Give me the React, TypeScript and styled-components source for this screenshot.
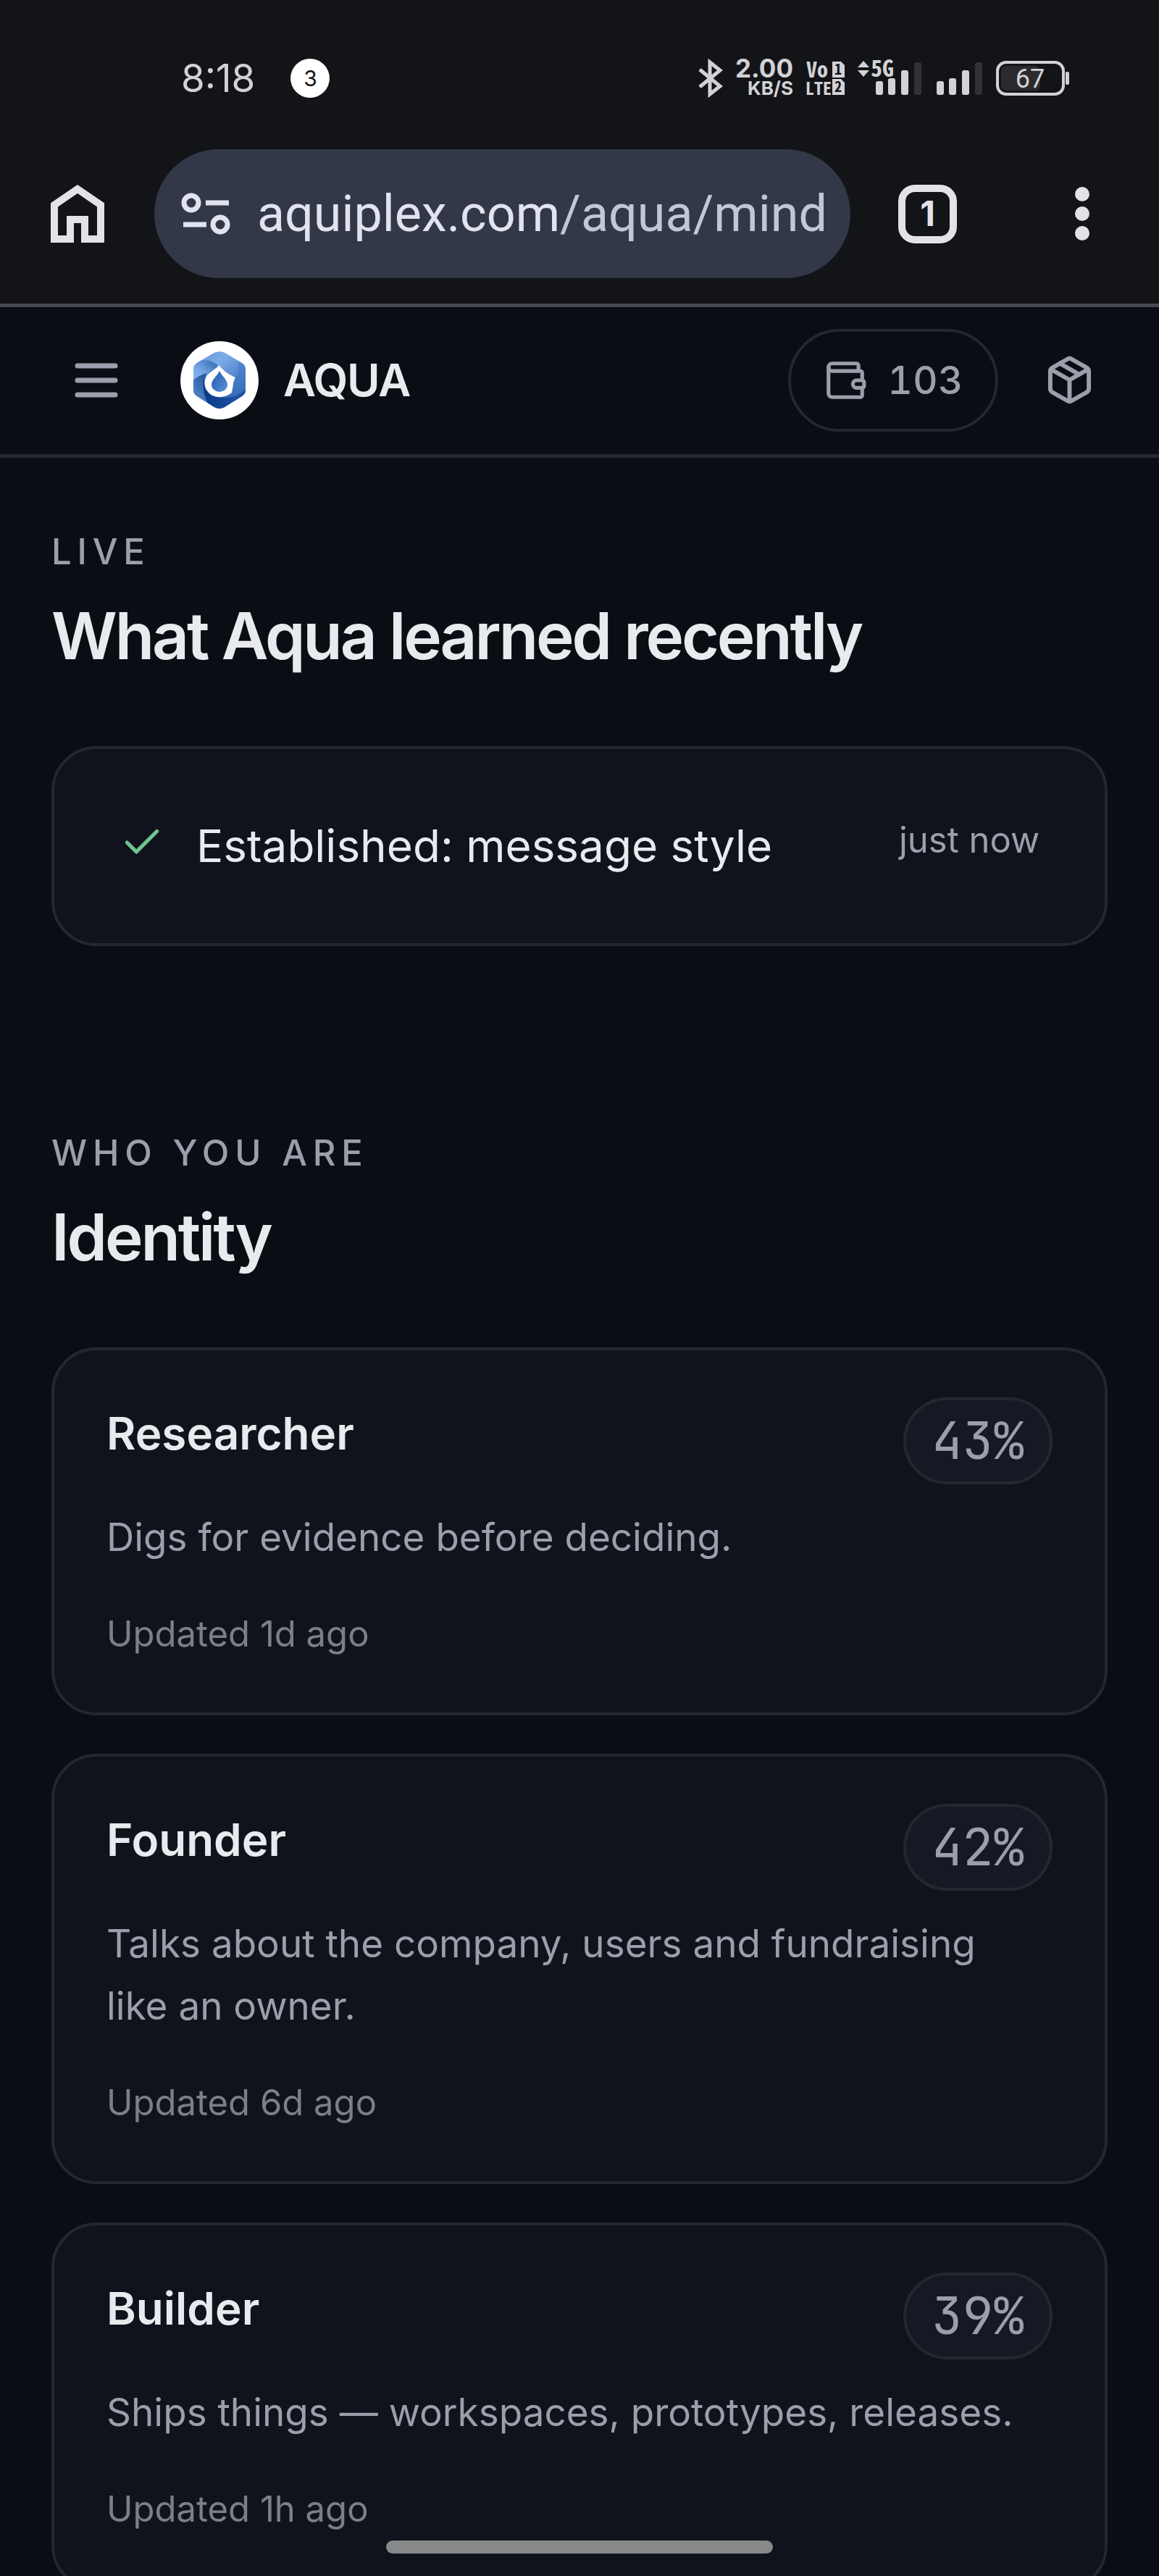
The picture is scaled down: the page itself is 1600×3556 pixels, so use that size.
import React from "react";
import styled, { createGlobalStyle } from "styled-components";
import { Check, Package, Wallet } from "lucide-react";

const color = {
  chrome: "#121418",
  page: "#0a0d14",
  card: "#10131b",
  chip: "#161924",
  line: "#23272e",
  text: "#e8eaee",
  muted: "#9a9fab",
  dim: "#7b7f89",
  status: "#d2d2d4",
  control: "#e2e2e8",
};

const condensed = '"Noto Sans Mono CJK SC", "Noto Sans CJK SC", monospace';

const GlobalStyle = createGlobalStyle`
  *, *::before, *::after { box-sizing: border-box; }
  body {
    margin: 0;
    background: ${color.page};
    color: ${color.text};
    font-family: Inter, "Noto Sans", sans-serif;
  }
  h1, h2, h3, p { margin: 0; }
  button { margin: 0; padding: 0; border: 0; background: none; color: inherit; font: inherit; cursor: pointer; }
  svg { display: block; flex: none; overflow: visible; }
`;

const Screen = styled.div`
  position: relative;
  display: flex;
  flex-direction: column;
  height: 100vh;
  overflow: hidden;
`;

const Chrome = styled.div`
  flex: none;
  background: ${color.chrome};
  border-bottom: 5px solid #48494e;
`;

const StatusBar = styled.div`
  display: flex;
  align-items: center;
  justify-content: space-between;
  height: 206px;
  padding: 10px 124px 0 250px;
  color: ${color.status};
`;

const StatusGroup = styled.div<{ $gap: number }>`
  display: flex;
  align-items: center;
  gap: ${(p) => p.$gap}px;
`;

const Clock = styled.time`
  font-size: 53px;
  line-height: 60px;
`;

const Notifications = styled.span`
  display: grid;
  place-items: center;
  width: 54px;
  height: 54px;
  border-radius: 50%;
  background: #fff;
  color: #121418;
  font-size: 30px;
  line-height: 30px;
`;

const Speed = styled.div`
  display: flex;
  flex-direction: column;
  align-items: flex-end;
  font-size: 35px;
  font-weight: 700;
  line-height: 28px;

  small {
    font-size: 26px;
    line-height: 28px;
  }
`;

const Toolbar = styled.div`
  display: flex;
  align-items: center;
  padding: 0 53px 35px 53px;
  color: ${color.control};
`;

const ToolButton = styled.button`
  display: grid;
  place-items: center;
  width: 107px;
  height: 107px;

  & + & {
    margin-left: 106px;
  }
`;

const AddressBar = styled.button`
  display: flex;
  align-items: center;
  flex: 1;
  min-width: 0;
  height: 178px;
  margin: 0 53px;
  padding: 0 36px;
  gap: 36px;
  border-radius: 89px;
  background: #323848;
  color: #e1e3ef;
  font-family: Roboto, sans-serif;
  font-size: 70px;
  line-height: 84px;
  white-space: nowrap;
`;

const UrlPath = styled.span`
  color: #c3c6d6;
`;

const TabCount = styled.span`
  display: grid;
  place-items: center;
  width: 81px;
  height: 81px;
  border: 10px solid currentColor;
  border-radius: 23px;
  font-size: 48px;
  font-weight: 700;
  line-height: 48px;
`;

const AppHeader = styled.header`
  display: flex;
  align-items: center;
  justify-content: space-between;
  flex: none;
  height: 208px;
  padding: 0 53px 2px;
  border-bottom: 5px solid ${color.line};
  color: ${color.muted};
`;

const HeaderGroup = styled.div<{ $gap: number }>`
  display: flex;
  align-items: center;
  gap: ${(p) => p.$gap}px;
`;

const IconButton = styled.button<{ $size: number }>`
  display: grid;
  place-items: center;
  width: ${(p) => p.$size}px;
  height: ${(p) => p.$size}px;
`;

const Brand = styled.a`
  display: flex;
  align-items: center;
  gap: 34px;
  color: ${color.text};
  font-size: 62px;
  font-weight: 600;
  letter-spacing: -0.02em;
  line-height: 72px;
  text-decoration: none;
`;

const Credits = styled.button`
  display: flex;
  align-items: center;
  height: 142px;
  padding: 0 44px;
  gap: 27px;
  border: 4px solid ${color.line};
  border-radius: 71px;
  font-size: 53px;
  font-weight: 500;
  font-variant-numeric: tabular-nums;
  letter-spacing: 0.01em;
  line-height: 72px;
`;

const Main = styled.main`
  display: flex;
  flex-direction: column;
  gap: 250px;
  padding: 94px 71px;
`;

const Eyebrow = styled.p`
  margin-bottom: 20px;
  color: ${color.muted};
  font-size: 49px;
  font-weight: 500;
  letter-spacing: 0.16em;
  line-height: 72px;
  text-transform: uppercase;
`;

const Heading = styled.h2`
  margin-bottom: 92px;
  font-size: 89px;
  font-weight: 600;
  letter-spacing: -0.035em;
  line-height: 120px;
`;

const Stack = styled.div`
  display: flex;
  flex-direction: column;
  gap: 53px;
`;

const Surface = styled.article`
  border: 4px solid ${color.line};
  border-radius: 62px;
  background: ${color.card};
`;

const EventCard = styled(Surface)`
  display: flex;
  align-items: flex-start;
  gap: 44px;
  padding: 84px 90px;

  svg {
    margin-top: 14px;
    color: #6fc48f;
  }
`;

const EventText = styled.p`
  flex: 1;
  font-size: 62px;
  line-height: 100px;
`;

const EventTime = styled.time`
  color: ${color.muted};
  font-size: 49px;
  line-height: 84px;
`;

const TraitCard = styled(Surface)`
  padding: 65px 72px 70px;
`;

const TraitTop = styled.div`
  display: flex;
  align-items: flex-start;
  justify-content: space-between;
  margin-bottom: 30px;
`;

const TraitName = styled.h3`
  font-size: 62px;
  font-weight: 600;
  line-height: 100px;
`;

const Score = styled.span`
  display: flex;
  align-items: center;
  height: 120px;
  padding: 0 35px;
  border: 4px solid ${color.line};
  border-radius: 60px;
  background: ${color.chip};
  color: ${color.muted};
  font-family: "JetBrains Mono", "DejaVu Sans Mono", monospace;
  font-size: 71px;
  line-height: 80px;
`;

const TraitText = styled.p`
  margin-bottom: 52px;
  padding-right: 18px;
  color: ${color.muted};
  font-size: 53px;
  line-height: 86px;
`;

const Updated = styled.p`
  color: ${color.dim};
  font-size: 49px;
  line-height: 77px;
`;

/* Gesture bar floating over the page content. */
const HomeIndicator = styled.div`
  position: absolute;
  bottom: 31px;
  left: 50%;
  width: 534px;
  height: 18px;
  margin-left: -267px;
  border-radius: 9px;
  background: #87888a;
`;

const BluetoothIcon = () => (
  <svg width="34" height="52" viewBox="0 0 34 52" fill="none" stroke="currentColor" strokeWidth="5">
    <path d="M2 14 30 37 16 48V4l14 11L2 38" />
  </svg>
);

const VolteIcon = () => (
  <svg width="55" height="48" viewBox="0 0 55 48" fill="currentColor" fontFamily={condensed} fontWeight="700">
    <text x="1" y="23" fontSize="30">Vo</text>
    <text x="0" y="47" fontSize="24">LTE</text>
    <path d="M37 1h12l5 5v17H37zM37 25h12l5 5v17H37z" />
    <g fill={color.chrome} fontSize="20" textAnchor="middle">
      <text x="45" y="19">1</text>
      <text x="45" y="43">2</text>
    </g>
  </svg>
);

const Bars = ({ x }: { x: number }) => (
  <g>
    <rect x={x} y="29" width="10" height="19" rx="3" />
    <rect x={x + 17} y="25" width="10" height="23" rx="3" />
    <rect x={x + 35} y="14" width="10" height="34" rx="3" />
    <rect x={x + 53} y="3" width="10" height="45" rx="3" fill="#323236" />
  </g>
);

const SignalIcon = () => (
  <svg width="174" height="50" viewBox="0 0 174 50" fill="currentColor">
    <path d="M0 10 8 1l8 9zM0 14h16l-8 9z" />
    <Bars x={25} />
    <Bars x={109} />
    <text x="18" y="23" fontFamily={condensed} fontWeight="700" fontSize="32" stroke={color.chrome} strokeWidth="2" paintOrder="stroke">5G</text>
  </svg>
);

const BatteryIcon = () => (
  <svg width="101" height="48" viewBox="0 0 101 48">
    <rect x="2" y="2" width="91" height="44" rx="12" fill="none" stroke="currentColor" strokeWidth="4" />
    <rect x="7" y="7" width="54" height="34" rx="7" fill="#2b2b2e" />
    <rect x="96" y="15" width="5" height="18" rx="2" fill="currentColor" />
    <text x="47" y="37" textAnchor="middle" fontFamily="Roboto, sans-serif" fontSize="36" fill="currentColor">67</text>
  </svg>
);

const HomeIcon = () => (
  <svg width="74" height="82" viewBox="0 0 74 82" fill="none" stroke="currentColor" strokeWidth="10">
    <path d="M5 76V29L37 7l32 22v47H47V49H27v27z" />
  </svg>
);

const SiteInfoIcon = () => (
  <svg width="70" height="58" viewBox="0 0 70 58" fill="none" stroke="currentColor" strokeWidth="7">
    <circle cx="15" cy="14" r="10" />
    <path d="M35 14h32M4 44h32" />
    <circle cx="55" cy="44" r="10" />
  </svg>
);

const MoreIcon = () => (
  <svg width="20" height="74" viewBox="0 0 20 74" fill="currentColor">
    <circle cx="10" cy="10" r="10" />
    <circle cx="10" cy="37" r="10" />
    <circle cx="10" cy="64" r="10" />
  </svg>
);

const MenuIcon = () => (
  <svg width="60" height="48" viewBox="0 0 60 48" stroke="currentColor" strokeWidth="7" strokeLinecap="round">
    <path d="M4 4h52M4 24h52M4 44h52" />
  </svg>
);

const Logo = () => (
  <svg width="108" height="108" viewBox="0 0 108 108" aria-hidden="true">
    <defs>
      <linearGradient id="top" x1="0" y1="0" x2="1" y2="1">
        <stop offset="0" stopColor="#5a92dc" />
        <stop offset=".5" stopColor="#7eabe8" />
        <stop offset="1" stopColor="#4d80c8" />
      </linearGradient>
      <linearGradient id="left" x1="0" y1="1" x2="1" y2="0">
        <stop offset="0" stopColor="#8dbbf2" />
        <stop offset=".5" stopColor="#7aabe8" />
        <stop offset="1" stopColor="#2c62ae" />
      </linearGradient>
      <linearGradient id="low" x1="0" y1="1" x2="1" y2="0">
        <stop offset="0" stopColor="#6fa3e4" />
        <stop offset="1" stopColor="#0f408c" />
      </linearGradient>
      <linearGradient id="base" x1="0" y1="0" x2="1" y2="0">
        <stop offset="0" stopColor="#0c3a86" />
        <stop offset="1" stopColor="#2558a6" />
      </linearGradient>
      <linearGradient id="right" x1="0" y1="0" x2="0" y2="1">
        <stop offset="0" stopColor="#5c8fd4" />
        <stop offset="1" stopColor="#2b62b2" />
      </linearGradient>
      <linearGradient id="drop" x1="0" y1="0" x2="1" y2="1">
        <stop offset="0" stopColor="#1f59a8" />
        <stop offset="1" stopColor="#5b93dc" />
      </linearGradient>
      <clipPath id="hex">
        <path d="M47 16q7-3 14 0l24 14q5 3 5 9v28q0 6-5 9L61 91q-7 4-14 0L23 76q-5-3-5-9V39q0-6 5-9z" />
      </clipPath>
    </defs>
    <circle cx="54" cy="54" r="54" fill="#fff" />
    <g clipPath="url(#hex)">
      <path d="M10 10h88v88H10z" fill="url(#right)" />
      <path d="M22 30 54 8l26 20c2 10 0 18-5 22L54 36C46 26 34 24 22 30z" fill="url(#top)" />
      <path d="M10 70V34c10-10 32-12 44 2-16 6-22 12-21 22z" fill="url(#left)" />
      <path d="M10 80V68c4-14 12-19 26-24-6 14 0 30 14 36l-4 16z" fill="url(#low)" />
      <path d="M33 50c-1 16 8 28 27 28 14 0 24-4 32-14v38H50C34 86 29 66 33 50z" fill="url(#base)" />
    </g>
    <path d="M53 33c7 8 12 12 23 17-4 7-3 13-5 21-8 7-24 9-32 0-7-7-7-17-2-24 4-5 12-8 16-14z" fill="#fff" />
    <path d="M54 41c3 7 11 12 11 19a11 10 0 0 1-22 0c0-7 8-12 11-19z" fill="url(#drop)" />
  </svg>
);

const traits = [
  { name: "Researcher", score: 43, text: "Digs for evidence before deciding.", updated: "1d" },
  { name: "Founder", score: 42, text: "Talks about the company, users and fundraising like an owner.", updated: "6d" },
  { name: "Builder", score: 39, text: "Ships things — workspaces, prototypes, releases.", updated: "1h" },
];

export default function App() {
  return (
    <Screen>
      <GlobalStyle />
      <Chrome>
        <StatusBar>
          <StatusGroup $gap={49}>
            <Clock>8:18</Clock>
            <Notifications>3</Notifications>
          </StatusGroup>
          <StatusGroup $gap={17}>
            <BluetoothIcon />
            <Speed>
              2.00
              <small>KB/S</small>
            </Speed>
            <VolteIcon />
            <SignalIcon />
            <BatteryIcon />
          </StatusGroup>
        </StatusBar>
        <Toolbar>
          <ToolButton aria-label="Home">
            <HomeIcon />
          </ToolButton>
          <AddressBar aria-label="Address">
            <SiteInfoIcon />
            <span>
              aquiplex.com<UrlPath>/aqua/mind</UrlPath>
            </span>
          </AddressBar>
          <ToolButton aria-label="Tabs">
            <TabCount>1</TabCount>
          </ToolButton>
          <ToolButton aria-label="More">
            <MoreIcon />
          </ToolButton>
        </Toolbar>
      </Chrome>
      <AppHeader>
        <HeaderGroup $gap={36}>
          <IconButton $size={160} aria-label="Menu">
            <MenuIcon />
          </IconButton>
          <Brand href="#">
            <Logo />
            AQUA
          </Brand>
        </HeaderGroup>
        <HeaderGroup $gap={27}>
          <Credits>
            <Wallet size={62} strokeWidth={2} />
            103
          </Credits>
          <IconButton $size={142} aria-label="Workspace">
            <Package size={71} strokeWidth={2} />
          </IconButton>
        </HeaderGroup>
      </AppHeader>
      <Main>
        <section>
          <Eyebrow>Live</Eyebrow>
          <Heading>What Aqua learned recently</Heading>
          <EventCard>
            <Check size={62} strokeWidth={2} />
            <EventText>Established: message style</EventText>
            <EventTime>just now</EventTime>
          </EventCard>
        </section>
        <section>
          <Eyebrow>Who you are</Eyebrow>
          <Heading>Identity</Heading>
          <Stack>
            {traits.map((t) => (
              <TraitCard key={t.name}>
                <TraitTop>
                  <TraitName>{t.name}</TraitName>
                  <Score>{t.score}%</Score>
                </TraitTop>
                <TraitText>{t.text}</TraitText>
                <Updated>Updated {t.updated} ago</Updated>
              </TraitCard>
            ))}
          </Stack>
        </section>
      </Main>
      <HomeIndicator />
    </Screen>
  );
}
